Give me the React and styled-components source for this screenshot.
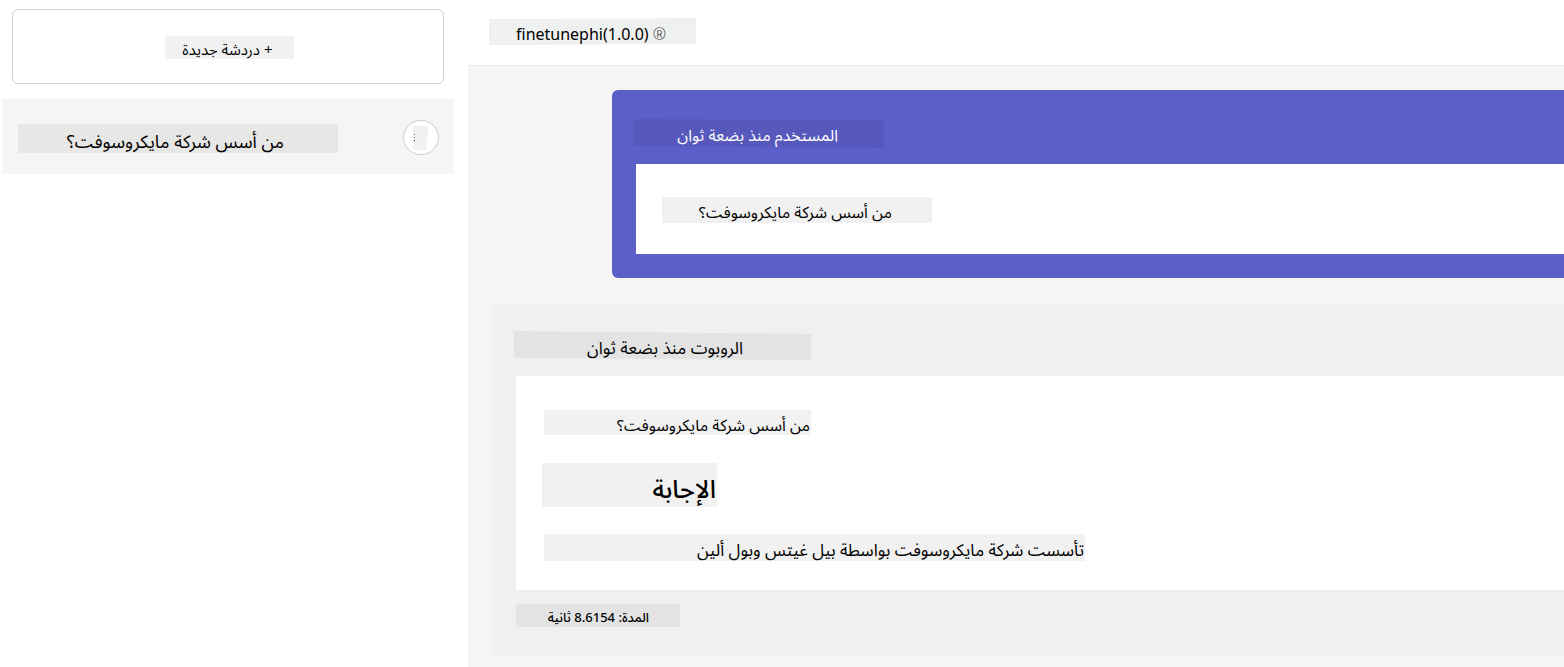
import React from "react";
import styled, { createGlobalStyle } from "styled-components";

const GlobalStyle = createGlobalStyle`
  *, *::before, *::after { box-sizing: border-box; }
  body {
    margin: 0;
    background: #fff;
    color: #000;
    font-family: "Noto Sans", "Noto Sans Arabic", "DejaVu Sans", sans-serif;
    font-size: 16px;
  }
  h1, h2, p { margin: 0; font-weight: 400; }
`;

const Page = styled.div`
  display: flex;
  min-height: 100vh;
  overflow: hidden;
`;

const Sidebar = styled.aside`
  flex: 0 0 468px;
  padding: 9px 14px 0 2px;
`;

const NewChatButton = styled.button`
  display: flex;
  align-items: center;
  justify-content: center;
  width: calc(100% - 20px);
  height: 75px;
  margin: 0 10px 15px;
  padding: 1px 0 0 2px;
  border: 1px solid #d1d1d1;
  border-radius: 6px;
  background: #fff;
  color: inherit;
  font: inherit;
  text-align: start;
`;

const ChatRow = styled.div`
  display: flex;
  align-items: center;
  justify-content: space-between;
  height: 75px;
  padding: 2px 15px 0 16px;
  background: #f5f5f5;
`;

const ChatLink = styled.a`
  padding-top: 2px;
  color: inherit;
  text-decoration: none;
`;

const MoreButton = styled.button`
  display: flex;
  align-items: center;
  padding: 0 0 0 9px;
  width: 36px;
  height: 35px;
  border: 1px solid #d1d1d1;
  border-radius: 50%;
  background: #fff;
`;

const MoreIcon = styled.svg`
  display: block;
  width: 15px;
  height: 24px;
`;

const Main = styled.main`
  flex: 1;
  min-width: 0;
  background: #f5f5f5;
`;

const TopBar = styled.header`
  height: 66px;
  padding: 18px 21px 0;
  border-bottom: 1px solid #e6e6e6;
  background: #fff;
`;

const Mark = styled.span`
  color: #333;
  font-weight: 300;
`;

const Thread = styled.div`
  display: flex;
  flex-direction: column;
  gap: 25px;
  padding: 24px 0 12px 24px;
`;

const tones = {
  light: "#f1f1f1",
  title: "#e7e7e5",
  header: "#eff1f0",
  gray: "#e3e3e3",
  purple: "#5659bb",
};

const Label = styled.span`
  display: block;
  width: ${(p) => p.$width}px;
  height: ${(p) => p.$height}px;
  padding: ${(p) => p.$top || 0}px ${(p) => p.$end || 0}px 0 ${(p) => p.$start || 0}px;
  background: ${(p) => tones[p.$tone || "light"]};
  clip-path: ${(p) => p.$clip || "none"};
  font-size: ${(p) => p.$size || 16}px;
  font-weight: ${(p) => p.$weight || 400};
  line-height: ${(p) => p.$height}px;
  white-space: nowrap;
`;

const Card = styled.article`
  padding: ${(p) => (p.$user ? "29px 0 24px 22px" : "28px 0 28px 22px")};
  margin-left: ${(p) => (p.$user ? 120 : 0)}px;
  border-radius: 6px 0 0 6px;
  background: ${(p) => (p.$user ? "#5b5fc7" : "#f0f0f0")};
  color: ${(p) => (p.$user ? "#fff" : "#000")};
`;

const Bubble = styled.div`
  display: flex;
  flex-direction: column;
  margin: 16px 0 0 2px;
  padding: ${(p) => (p.$user ? "33px 26px 31px" : "34px 28px 29px")};
  background: #fff;
  color: #000;
`;

const AnswerHeading = styled.h2`
  margin: 28px 0 27px -2px;
`;

const Duration = styled.p`
  margin: 14px 0 0 2px;
`;

export default function App() {
  return (
    <Page>
      <GlobalStyle />
      <Sidebar>
        <NewChatButton type="button">
          <Label dir="rtl" $width={129} $height={23} $top={2} $end={21} $size={15}>
            + دردشة جديدة
          </Label>
        </NewChatButton>
        <ChatRow>
          <ChatLink href="#chat">
            <Label dir="rtl" $width={320} $height={29} $top={3} $end={54} $size={18} $tone="title">
              من أسس شركة مايكروسوفت؟
            </Label>
          </ChatLink>
          <MoreButton type="button" aria-label="المزيد">
            <MoreIcon viewBox="0 0 15 24" aria-hidden="true">
              <path d="M0 0H15V12H14V24H0Z" fill="#f1f1f1" />
              <rect x="1" y="8" width="1" height="1" fill="#777" />
              <rect x="1" y="11" width="1" height="1" fill="#777" />
              <rect x="1" y="14" width="1" height="1" fill="#222" />
            </MoreIcon>
          </MoreButton>
        </ChatRow>
      </Sidebar>
      <Main>
        <TopBar>
          <h1>
            <Label
              $width={207}
              $height={27}
              $top={3}
              $start={27}
              $tone="header"
              $clip="polygon(0 1px, 100% 0, 100% 26px, 0 100%)"
            >
              finetunephi(1.0.0) <Mark>®</Mark>
            </Label>
          </h1>
        </TopBar>
        <Thread>
          <Card $user>
            <p>
              <Label
                dir="rtl"
                $width={250}
                $height={29}
                $top={2}
                $end={46}
                $tone="purple"
                $clip="polygon(0 0, 100% 1px, 100% 100%, 0 27px)"
              >
                المستخدم منذ بضعة ثوان
              </Label>
            </p>
            <Bubble $user>
              <Label dir="rtl" $width={270} $height={26} $top={2} $end={40}>
                من أسس شركة مايكروسوفت؟
              </Label>
            </Bubble>
          </Card>
          <Card>
            <p>
              <Label
                dir="rtl"
                $width={297}
                $height={29}
                $top={2}
                $end={68}
                $size={17}
                $tone="gray"
                $clip="polygon(0 0, 100% 3px, 100% 100%, 0 27px)"
              >
                الروبوت منذ بضعة ثوان
              </Label>
            </p>
            <Bubble>
              <Label dir="rtl" $width={267} $height={25} $top={3} $end={1}>
                من أسس شركة مايكروسوفت؟
              </Label>
              <AnswerHeading>
                <Label dir="rtl" $width={175} $height={44} $top={3} $end={1} $size={25} $weight={500}>
                  الإجابة
                </Label>
              </AnswerHeading>
              <Label dir="rtl" $width={541} $height={27} $top={2} $end={1} $size={17}>
                تأسست شركة مايكروسوفت بواسطة بيل غيتس وبول ألين
              </Label>
            </Bubble>
            <Duration>
              <Label
                dir="rtl"
                $width={164}
                $height={23}
                $top={2}
                $end={31}
                $size={13}
                $weight={500}
                $tone="gray"
              >
                المدة: 8.6154 ثانية
              </Label>
            </Duration>
          </Card>
        </Thread>
      </Main>
    </Page>
  );
}
